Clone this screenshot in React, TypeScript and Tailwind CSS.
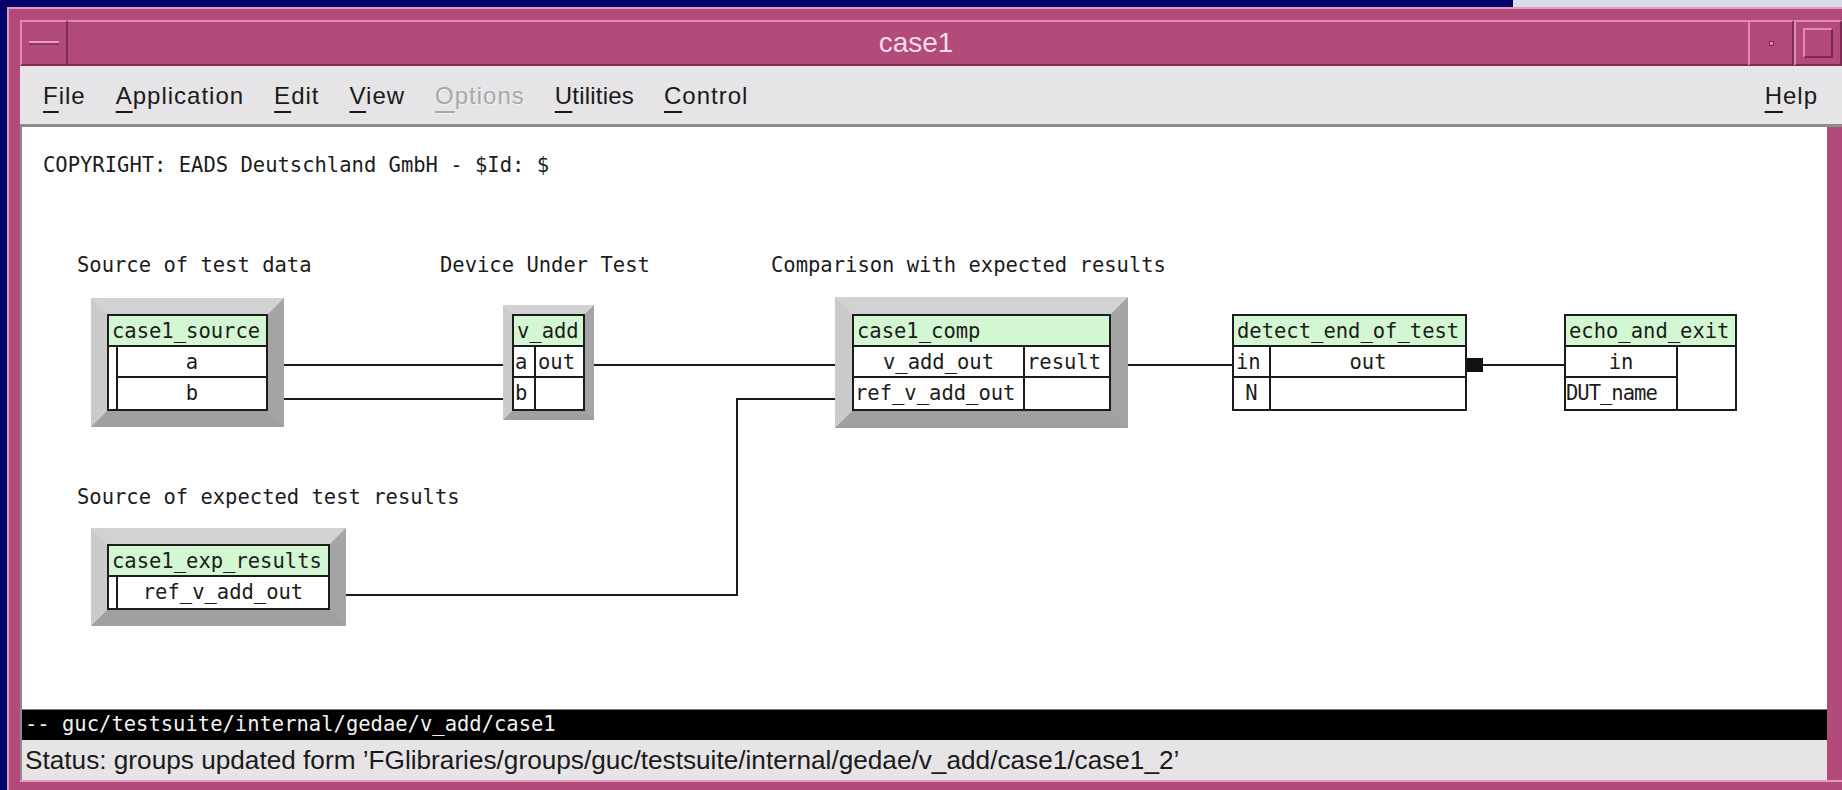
import React from 'react';

const mono = "font-['DejaVu_Sans_Mono',monospace] text-[20.5px] text-[#1c1c1c]";
const sans = "font-['Liberation_Sans',Arial,sans-serif]";

// raised grey frame around a group node
function Frame({ pos, thick, children }: { pos: string; thick: string; children: React.ReactNode }) {
  return (
    <div
      className={`absolute ${pos} ${thick} border-t-[#d2d2d2] border-l-[#cbcbcb] border-r-[#a4a4a4] border-b-[#a0a0a0] bg-[#c2c2c2]`}
    >
      {children}
    </div>
  );
}

function Box({ title, width, children }: { title: string; width: string; children: React.ReactNode }) {
  return (
    <div className={`${width} border-2 border-[#1c1c1c] bg-white ${mono}`}>
      <div className="h-[31px] border-b-2 border-[#1c1c1c] bg-[#d3f6d3] px-[3px] leading-[31px] whitespace-nowrap">
        {title}
      </div>
      {children}
    </div>
  );
}

function MenuItem({ k, rest, disabled, tight }: { k: string; rest: string; disabled?: boolean; tight?: boolean }) {
  return (
    <span
      className={`${disabled ? 'text-[#a8a8a8] [text-shadow:1px_1px_0_#f4f4f4]' : ''} ${tight ? 'tracking-[0.2px]' : ''}`}
    >
      <span className="underline decoration-2 underline-offset-[7px]">{k}</span>
      {rest}
    </span>
  );
}

function Diagram() {
  return (
    <div className="relative flex-1 bg-white">
      <div className={`${mono} pl-[21px] pt-[26px] leading-[24px]`}>COPYRIGHT: EADS Deutschland GmbH - $Id: $</div>

      <div className={`${mono} absolute left-[55px] top-[126px] leading-[24px]`}>Source of test data</div>
      <div className={`${mono} absolute left-[418px] top-[126px] leading-[24px]`}>Device Under Test</div>
      <div className={`${mono} absolute left-[749px] top-[126px] leading-[24px]`}>Comparison with expected results</div>
      <div className={`${mono} absolute left-[55px] top-[358px] leading-[24px]`}>Source of expected test results</div>

      {/* wires between ports */}
      <svg className="pointer-events-none absolute left-0 top-0" width="1805" height="583">
        <g fill="none" stroke="#1c1c1c" strokeWidth="2">
          <line x1="262" y1="238" x2="481" y2="238" />
          <line x1="262" y1="272" x2="481" y2="272" />
          <line x1="572" y1="238" x2="813" y2="238" />
          <line x1="1106" y1="238" x2="1210" y2="238" />
          <line x1="1461" y1="238" x2="1542" y2="238" />
          <polyline points="324,468 715,468 715,272 813,272" />
        </g>
        <rect x="1445" y="231" width="16" height="14" fill="#111" />
      </svg>

      <Frame pos="left-[69px] top-[171px]" thick="border-[16px]">
        <Box title="case1_source" width="w-[161px]">
          <div className="grid grid-cols-[9px_1fr]">
            <div className="row-span-2 border-r-2 border-[#1c1c1c]" />
            <div className="h-[31px] border-b-2 border-[#1c1c1c] text-center leading-[31px]">a</div>
            <div className="h-[31px] text-center leading-[31px]">b</div>
          </div>
        </Box>
      </Frame>

      <Frame pos="left-[481px] top-[178px]" thick="border-[9px]">
        <Box title="v_add" width="w-[73px]">
          <div className="grid grid-cols-[22px_1fr]">
            <div className="h-[31px] border-r-2 border-b-2 border-[#1c1c1c] pl-[1px] leading-[31px]">a</div>
            <div className="h-[31px] border-b-2 border-[#1c1c1c] pl-[2px] leading-[31px]">out</div>
            <div className="h-[31px] border-r-2 border-[#1c1c1c] pl-[1px] leading-[31px]">b</div>
            <div className="h-[31px]" />
          </div>
        </Box>
      </Frame>

      <Frame pos="left-[813px] top-[170px]" thick="border-[17px]">
        <Box title="case1_comp" width="w-[259px]">
          <div className="grid grid-cols-[171px_1fr]">
            <div className="h-[31px] border-r-2 border-b-2 border-[#1c1c1c] text-center leading-[31px]">v_add_out</div>
            <div className="h-[31px] border-b-2 border-[#1c1c1c] pl-[2px] leading-[31px]">result</div>
            <div className="h-[31px] border-r-2 border-[#1c1c1c] pl-[1px] leading-[31px]">ref_v_add_out</div>
            <div className="h-[31px]" />
          </div>
        </Box>
      </Frame>

      <div className="absolute left-[1210px] top-[187px]">
        <Box title="detect_end_of_test" width="w-[235px]">
          <div className="grid grid-cols-[37px_1fr]">
            <div className="h-[31px] border-r-2 border-b-2 border-[#1c1c1c] pl-[2px] leading-[31px]">in</div>
            <div className="h-[31px] border-b-2 border-[#1c1c1c] text-center leading-[31px]">out</div>
            <div className="h-[31px] border-r-2 border-[#1c1c1c] text-center leading-[31px]">N</div>
            <div className="h-[31px]" />
          </div>
        </Box>
      </div>

      <div className="absolute left-[1542px] top-[187px]">
        <Box title="echo_and_exit" width="w-[173px]">
          <div className="grid grid-cols-[112px_1fr]">
            <div className="h-[31px] border-r-2 border-b-2 border-[#1c1c1c] text-center leading-[31px]">in</div>
            <div className="row-span-2" />
            <div className="h-[31px] border-r-2 border-[#1c1c1c] leading-[31px] tracking-[-1px]">DUT_name</div>
          </div>
        </Box>
      </div>

      <Frame pos="left-[69px] top-[401px]" thick="border-[16px]">
        <Box title="case1_exp_results" width="w-[223px]">
          <div className="grid grid-cols-[9px_1fr]">
            <div className="h-[31px] border-r-2 border-[#1c1c1c]" />
            <div className="h-[31px] text-center leading-[31px]">ref_v_add_out</div>
          </div>
        </Box>
      </Frame>
    </div>
  );
}

export default function App() {
  return (
    <div className="flex h-[790px] w-[1842px] flex-col overflow-hidden bg-[#03036b]">
      <div className="flex h-[7px] shrink-0">
        <div className="w-[1513px] bg-[#03036b]" />
        <div className="flex-1 bg-[#d9dbe8]" />
      </div>
      <div className="flex flex-1 pl-[7px]">
        <div className="flex flex-1 flex-col border-t-2 border-l-2 border-[#e596bd] bg-[#b24a7a] pl-[11px] pt-[11px]">
          {/* title bar */}
          <div className="flex h-[46px] shrink-0">
            <div className="flex w-[48px] items-center justify-center border-t-2 border-l-2 border-[#e08ab4] border-r-2 border-b-2 border-r-[#7c2c52] border-b-[#7c2c52]">
              <div className="h-[4px] w-[30px] border-t-2 border-[#e89cc2] bg-[#8e3862]" />
            </div>
            <div className={`flex flex-1 items-center justify-center border-t-2 border-[#e08ab4] border-b-2 border-b-[#7c2c52] pl-[16px] ${sans} text-[28px] text-[#f3dce8]`}>
              case1
            </div>
            <div className="flex w-[46px] items-center justify-center border-2 border-[#e08ab4] border-r-[#7c2c52] border-b-[#7c2c52]">
              <div className="h-[5px] w-[5px] border border-[#7c2c52] bg-[#d78ab0]" />
            </div>
            <div className="flex w-[48px] items-center justify-center border-2 border-[#e08ab4] border-r-[#7c2c52] border-b-[#7c2c52]">
              <div className="h-[30px] w-[30px] border-2 border-[#e08ab4] border-r-[#7c2c52] border-b-[#7c2c52]" />
            </div>
          </div>

          {/* menu bar */}
          <div className={`flex h-[61px] shrink-0 items-center justify-between border-b-[3px] border-[#8c8c8c] bg-[#e6e4e6] pl-[23px] pr-[24px] pt-[2px] ${sans} text-[24px] tracking-[1px] text-[#1a1a1a]`}>
            <div className="flex gap-[30px]">
              <MenuItem k="F" rest="ile" />
              <MenuItem k="A" rest="pplication" />
              <MenuItem k="E" rest="dit" />
              <MenuItem k="V" rest="iew" />
              <MenuItem k="O" rest="ptions" disabled />
              <MenuItem k="U" rest="tilities" tight />
              <MenuItem k="C" rest="ontrol" />
            </div>
            <MenuItem k="H" rest="elp" />
          </div>

          <div className="flex flex-1 flex-col border-l-2 border-[#8c8c8c] mr-[15px]">
            <Diagram />
            <div className="h-[31px] shrink-0 border-t border-[#777] bg-black pl-[3px] font-['DejaVu_Sans_Mono',monospace] text-[20.5px] leading-[29px] text-[#f2f2f2]">
              -- guc/testsuite/internal/gedae/v_add/case1
            </div>
            <div className={`h-[40px] shrink-0 bg-[#e6e4e6] pl-[3px] ${sans} text-[26.2px] leading-[40px] text-[#1a1a1a]`}>
              Status: groups updated form ’FGlibraries/groups/guc/testsuite/internal/gedae/v_add/case1/case1_2’
            </div>
          </div>
          <div className="h-[10px] shrink-0 border-t-2 border-[#e596bd]" />
        </div>
      </div>
    </div>
  );
}
